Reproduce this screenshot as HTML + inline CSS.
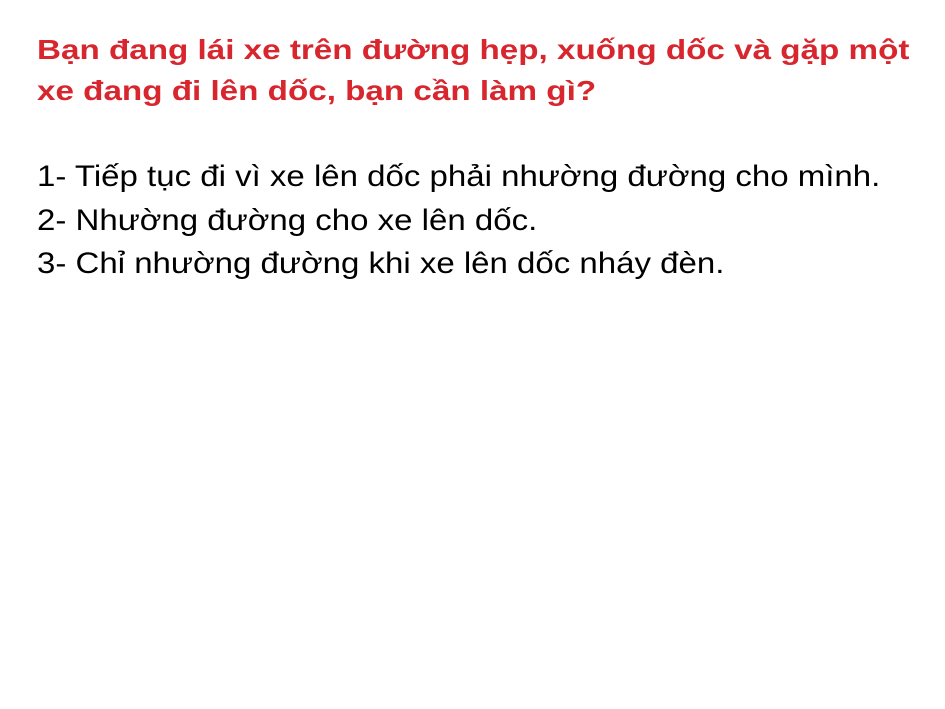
<!DOCTYPE html>
<html><head><meta charset="utf-8"><style>
body{margin:0;width:945px;height:709px;background:#fff;position:relative;overflow:hidden;font-family:"Liberation Sans",Arial,sans-serif}
.t{position:absolute;left:37px;top:29px;color:#d7262e;font-weight:bold;font-size:28px;line-height:41px;white-space:nowrap;transform:scaleX(1.186);transform-origin:0 0}
.b{position:absolute;left:37px;top:155px;color:#000;font-size:30px;line-height:43.5px;white-space:nowrap;transform:scaleX(1.1);transform-origin:0 0}
</style></head><body>
<div class="t">Bạn đang lái xe trên đường hẹp, xuống dốc và gặp một<br>xe đang đi lên dốc, bạn cần làm gì?</div>
<div class="b">1- Tiếp tục đi vì xe lên dốc phải nhường đường cho mình.<br>2- Nhường đường cho xe lên dốc.<br>3- Chỉ nhường đường khi xe lên dốc nháy đèn.</div>
</body></html>
